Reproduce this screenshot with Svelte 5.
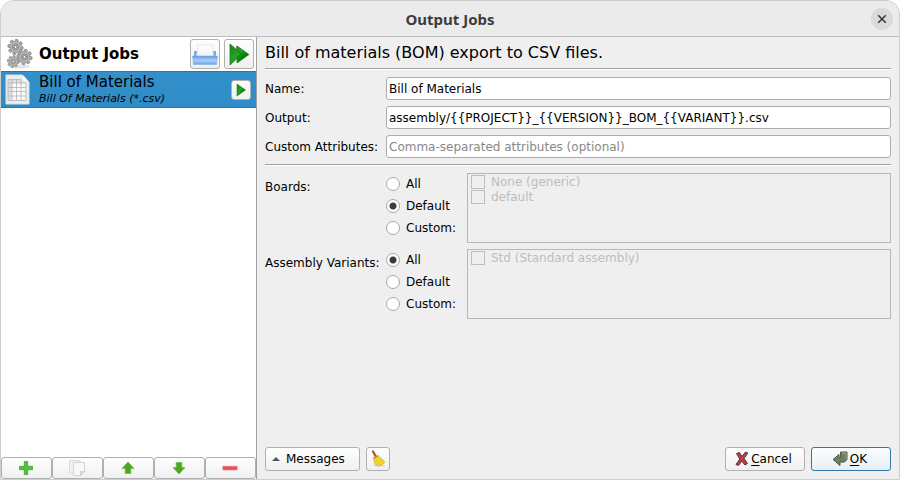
<script>
  let name = $state('Bill of Materials');
  let output = $state('assembly/{{PROJECT}}_{{VERSION}}_BOM_{{VARIANT}}.csv');
  let attributes = $state('');
  let selected = $state({ boards: 'Default', variants: 'All' });
  const groups = [
    { id: 'boards', label: 'Boards:', items: ['None (generic)', 'default'] },
    { id: 'variants', label: 'Assembly Variants:', items: ['Std (Standard assembly)'] }
  ];
  const modes = ['All', 'Default', 'Custom:'];
</script>

<svelte:head><title>Output Jobs</title></svelte:head>

{#snippet gear(x, y, r)}
  <g transform="translate({x} {y}) scale({r})">
    {#each [10, 55, 100, 145] as a}
      <rect x="-1.5" y="-7.600" width="3" height="15.200" rx="0.5" transform="rotate({a})" fill="#acadab" stroke="#7f817e" stroke-width="0.7" />
    {/each}
    <circle r="5.5" fill="#bbbcb9" stroke="#8b8d8a" stroke-width="0.6" />
    <circle r="3.2" fill="#b4b5b2" stroke="#7d7f7c" stroke-width="0.8" />
    <circle r="1.5" fill="#f4f4f4" stroke="#6d6f6c" stroke-width="0.8" />
  </g>
{/snippet}

<div class="window">
  <header class="titlebar">
    <h1>Output Jobs</h1>
    <button class="close" aria-label="Close">
      <svg width="10" height="10" viewBox="0 0 10 10"><path d="M1.2 1.2 8.8 8.8M8.8 1.2 1.2 8.8" stroke="#3b3b3b" stroke-width="1.6" /></svg>
    </button>
  </header>

  <div class="content">
    <aside>
      <div class="side-head">
        <svg width="28" height="32" viewBox="0 0 28 32">
          <ellipse cx="13" cy="28.500" rx="11" ry="2" fill="#e4e4e4" />
          {@render gear(9.5, 9, 1)}
          {@render gear(18.5, 19, 1)}
          {@render gear(7.2, 23.5, 0.78)}
        </svg>
        <h2>Output Jobs</h2>
        <button class="tool" aria-label="Open output directory">
          <svg width="26" height="26" viewBox="0 0 26 26">
            <defs>
              <linearGradient id="tray" x2="0" y2="1"><stop offset="0" stop-color="#5f97e2" /><stop offset=".5" stop-color="#a9cffa" /><stop offset="1" stop-color="#6da2e8" /></linearGradient>
              <linearGradient id="sheet" x2="0" y2="1"><stop stop-color="#fff" /><stop offset="1" stop-color="#eef2f7" /></linearGradient>
            </defs>
            <path d="M2 10h22v8h-22z" fill="#7aaae8" />
            <path d="M6 4h14.500l1 12h-17z" fill="url(#sheet)" stroke="#d7dce2" stroke-width=".6" />
            <path d="M.5 15h25l-1 8.500h-23z" fill="url(#tray)" stroke="#86b0e8" stroke-width=".6" />
          </svg>
        </button>
        <button class="tool" aria-label="Run all jobs">
          <svg width="24" height="24" viewBox="0 0 24 24">
            <defs><linearGradient id="run" x2="1" y2="1"><stop stop-color="#1c7d1a" /><stop offset=".45" stop-color="#23a524" /><stop offset=".6" stop-color="#078a0c" /><stop offset="1" stop-color="#056509" /></linearGradient></defs>
            <path d="M3 2 10 8V4L22 12.500 10 21V16.500L3 23z" fill="url(#run)" stroke="#2c7a2c" stroke-width=".8" />
            <path d="M10 4v4l4 4-4 4.500" fill="none" stroke="#12670f" stroke-width=".8" />
          </svg>
        </button>
      </div>

      <div class="job">
        <svg width="26" height="32" viewBox="0 0 26 32">
          <path d="M1 1h16.500l6.500 7v22h-23z" fill="#eee" stroke="#dedede" />
          <path d="M17.500 1 18 7.500l6 .5z" fill="#fff" stroke="#d5d5d5" stroke-width=".6" />
          <path d="M3 5.500h13v3.500h5v17.500h-18z" fill="#fafafa" />
          <path d="M3 5.500h4v21h-4zM3 5.500h13v3.500h-13z" fill="#dedede" />
          <path d="M3 5.500h13M3 9h18M3 13.500h18M3 17.500h18M3 22h18M3 26.500h18M3 5.500v21M7 5.500v21M11.500 5.500v21M16 5.500v21M21 9v17.500" fill="none" stroke="#b4b4b4" stroke-width=".8" />
        </svg>
        <div class="job-text">
          <strong>Bill of Materials</strong>
          <em>Bill Of Materials (*.csv)</em>
        </div>
        <button class="run" aria-label="Run job">
          <svg width="12" height="14" viewBox="0 0 12 14"><path d="M2 1 10.500 7 2 13z" fill="url(#run)" stroke="#2c7a2c" stroke-width=".6" /></svg>
        </button>
      </div>

      <div class="job-list"></div>

      <div class="side-tools">
        <button aria-label="Add job">
          <svg width="16" height="16" viewBox="0 0 16 16"><path d="M6.300 1.500h3.400v4.800h4.800v3.400H9.700v4.800H6.300V9.700H1.500V6.300h4.800z" fill="#55c13a" stroke="#43a52e" stroke-width=".8" /></svg>
        </button>
        <button aria-label="Copy job">
          <svg width="18" height="18" viewBox="0 0 18 18"><path d="M1.500 1.500h10.500v12.500h-10.500z" fill="#f1f1f1" stroke="#dadada" /><path d="M5.500 3.500h11v9l-4 4h-7z" fill="#f8f8f8" stroke="#d4d4d4" /><path d="M16.500 12.500h-4v4z" fill="#ddd" stroke="#c5c5c5" stroke-width=".6" /></svg>
        </button>
        <button aria-label="Move up">
          <svg width="14" height="14" viewBox="0 0 14 14"><path d="M7 1 13 7.500H9.800V12.500H4.200V7.500H1z" fill="#4ba51f" stroke="#6fbc48" stroke-width=".8" /></svg>
        </button>
        <button aria-label="Move down">
          <svg width="14" height="14" viewBox="0 0 14 14"><path d="M7 13 13 6.500H9.800V1.500H4.200V6.500H1z" fill="#4ba51f" stroke="#6fbc48" stroke-width=".8" /></svg>
        </button>
        <button aria-label="Remove job">
          <svg width="16" height="16" viewBox="0 0 16 16"><rect x=".8" y="6.300" width="14.400" height="3.600" rx=".6" fill="#f04b50" stroke="#e58286" stroke-width=".8" /></svg>
        </button>
      </div>
    </aside>

    <main>
      <p class="heading">Bill of materials (BOM) export to CSV files.</p>
      <hr />
      <div class="form">
        <label for="name">Name:</label>
        <input id="name" type="text" bind:value={name} />
        <label for="output">Output:</label>
        <input id="output" type="text" bind:value={output} />
        <label for="attributes">Custom Attributes:</label>
        <input id="attributes" type="text" placeholder="Comma-separated attributes (optional)" bind:value={attributes} />
      </div>
      <hr />
      <div class="choices">
        {#each groups as group}
          <div class="group" role="radiogroup" aria-labelledby={group.id}>
            <span class="group-label" id={group.id}>{group.label}</span>
            <div class="modes">
              {#each modes as mode}
                <label><input type="radio" name={group.id} value={mode} bind:group={selected[group.id]} />{mode}</label>
              {/each}
            </div>
            <div class="items">
              {#each group.items as item}
                <label><input type="checkbox" disabled={selected[group.id] !== 'Custom:'} />{item}</label>
              {/each}
            </div>
          </div>
        {/each}
      </div>

      <footer>
        <button class="btn messages">
          <svg width="8" height="4" viewBox="0 0 8 4"><path d="M4 0 8 4H0z" fill="#555" /></svg>
          Messages
        </button>
        <button class="btn broom" aria-label="Clear messages">
          <svg width="16" height="18" viewBox="0 0 16 18">
            <ellipse cx="9" cy="15.500" rx="6" ry="1.200" fill="#d2d2d2" />
            <path d="M3 1.500 5.500 6" stroke="#b5502f" stroke-width="2.200" stroke-linecap="round" />
            <path d="M3.500 8 8 5.500 14 11 14.500 13 9.500 15.500 5 14z" fill="#f3d72c" stroke="#d8b824" stroke-width=".8" />
            <path d="M3.500 7.200 7.500 5 8.500 6.500 4 9z" fill="#d9822f" />
            <path d="M6.500 9.500 8.500 13.500M9 8.500 12 12" stroke="#d8b824" stroke-width=".8" />
          </svg>
        </button>
        <span class="spacer"></span>
        <button class="btn dialog">
          <svg width="14" height="16" viewBox="0 0 14 16"><path d="M1.500 2.500 4.500 1.500 7 5.500 10.500 1 12.800 2 9 7.500 12.500 12.500 10 14 6.800 10 3.500 14.500 1 13.500 4.800 8z" fill="#b8404a" stroke="#5f3236" /></svg>
          <span><u>C</u>ancel</span>
        </button>
        <button class="btn dialog">
          <svg width="16" height="16" viewBox="0 0 16 16"><path d="M8.500 1h6.500v7.500L12.500 11H8v3.500L1 8.500 7 3.500V6.500h1.500z" fill="#6b8060" stroke="#4c5a46" /><path d="M9.500 2H14v6" fill="none" stroke="#95a68b" /></svg>
          <span><u>O</u>K</span>
        </button>
      </footer>
    </main>
  </div>
</div>

<style>
  :global(body) { background: #fff; }
  * { box-sizing: border-box; }
  .window {
    display: flex;
    flex-direction: column;
    min-height: 100vh;
    border: 1px solid #cdcdcd;
    border-radius: 14px 14px 0 0;
    background: #efefef;
    color: #000;
    font: 12px/16px "DejaVu Sans", sans-serif;
    overflow: hidden;
  }
  h1, h2, p { margin: 0; }
  button { padding: 0; font: inherit; color: inherit; }
  svg { display: block; flex: none; }
  .titlebar {
    display: grid;
    grid-template-columns: 1fr auto 1fr;
    align-items: center;
    height: 36px;
    padding: 0 6px;
    border-bottom: 1px solid #bcbcbc;
    background: #ebebeb;
  }
  h1 { grid-column: 2; font: bold 15px/18px "Noto Sans", sans-serif; color: #3d3d3d; }
  .close {
    display: grid;
    place-items: center;
    justify-self: end;
    width: 22px;
    height: 22px;
    border: 0;
    border-radius: 50%;
    background: #dadada;
  }
  .content { display: flex; flex: 1; }
  aside {
    display: flex;
    flex-direction: column;
    flex: none;
    width: 256px;
    border-right: 1px solid #a0a0a0;
    background: #fff;
  }
  .side-head { display: flex; align-items: center; gap: 4px; height: 34px; padding: 0 2px 0 5px; }
  h2 { flex: 1; padding-left: 1px; font-size: 15px; line-height: 20px; }
  .tool, .run, .btn, .side-tools button {
    display: flex;
    align-items: center;
    justify-content: center;
    border: 1px solid #b0b0b0;
    border-radius: 3px;
    background: linear-gradient(#fefefe, #f0f0f0);
  }
  .tool { width: 30px; height: 30px; }
  .job {
    display: flex;
    align-items: center;
    gap: 8px;
    height: 37px;
    padding: 0 5px 0 4px;
    border: solid #2878ad;
    border-width: 1px 0;
    background: linear-gradient(#3390cb, #308cc6);
  }
  .job-text { display: flex; flex: 1; flex-direction: column; padding-top: 1px; }
  .job-text strong { font-size: 15px; font-weight: normal; line-height: 18px; }
  .job-text em { font-size: 11px; line-height: 16px; }
  .run { width: 20px; height: 20px; }
  .job-list { flex: 1; }
  .side-tools { display: grid; grid-template-columns: repeat(5, 1fr); }
  .side-tools button { height: 22px; padding-right: 2px; }
  main { display: flex; flex: 1; flex-direction: column; min-width: 0; padding: 5px 8px 8px; }
  .heading { font-size: 16px; line-height: 22px; }
  hr { width: 100%; height: 2px; margin: 4px 0 7px; border: 0; border-top: 1px solid #a0a0a0; border-bottom: 1px solid #fff; }
  .form { display: grid; grid-template-columns: 115px 1fr; align-items: center; gap: 6px; }
  .form input {
    width: 100%;
    height: 23px;
    padding: 0 2px;
    border: 1px solid #adadad;
    border-radius: 3px;
    background: #fff;
    color: #000;
    font: inherit;
    outline: 0;
  }
  .form input::placeholder { color: #888; opacity: 1; }
  .choices { display: flex; flex-direction: column; gap: 6px; }
  .form + hr { margin-top: 6px; }
  .group { display: grid; grid-template-columns: 115px 75px 1fr; column-gap: 6px; height: 70px; }
  .group-label { padding-top: 6px; }
  .modes { display: flex; flex-direction: column; gap: 6px; padding-top: 3px; }
  .modes label, .items label { display: flex; align-items: center; gap: 6px; }
  .items { border: 1px solid #b7b7b7; padding: 0 3px; color: #bebebe; }
  .items label { height: 15px; }
  input[type="radio"], input[type="checkbox"] {
    appearance: none;
    flex: none;
    width: 14px;
    height: 14px;
    margin: 0;
    border: 1px solid #a8a8a8;
    background: #fff;
  }
  input[type="radio"] { border-radius: 50%; }
  input[type="radio"]:checked { background: radial-gradient(circle, #3c3c3c 3px, #fff 4px); }
  input[type="checkbox"]:disabled { border-color: #bebebe; background: #efefef; }
  footer { display: flex; gap: 6px; margin-top: auto; }
  .btn { height: 24px; }
  .messages { justify-content: flex-start; gap: 6px; width: 95px; padding-left: 6px; }
  .broom { width: 24px; }
  .spacer { flex: 1; }
  .dialog { gap: 2px; width: 80px; padding-right: 3px; }
  .dialog:last-child { border-color: #2f78a9; background: linear-gradient(#fdfefe, #e7eff5); }
  u { text-underline-offset: 2px; }
</style>
